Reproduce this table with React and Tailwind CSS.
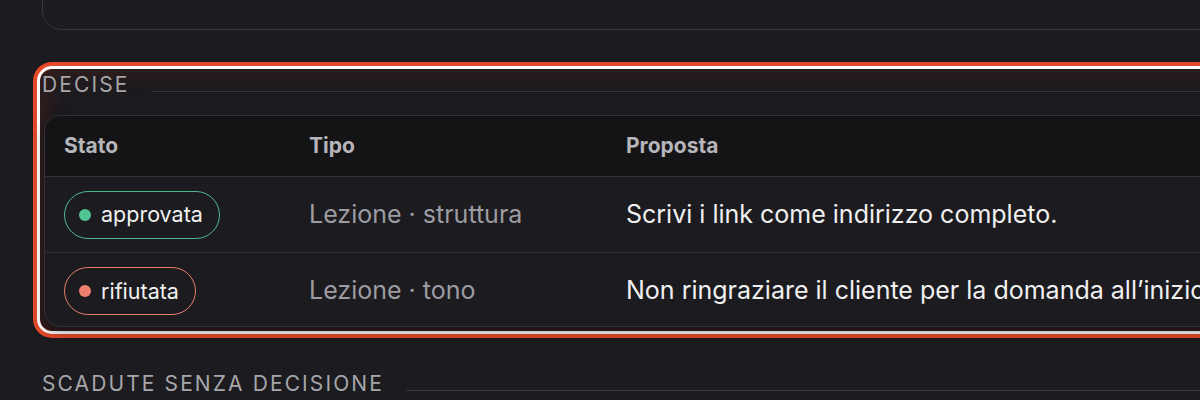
import React from "react";

const rows = [
  {
    status: "approvata",
    tone: "ok",
    kind: "Lezione · struttura",
    text: "Scrivi i link come indirizzo completo.",
  },
  {
    status: "rifiutata",
    tone: "no",
    kind: "Lezione · tono",
    text: "Non ringraziare il cliente per la domanda all’inizio",
  },
];

function StatusPill({ status, tone }) {
  const ok = tone === "ok";
  return (
    <span
      className={
        ok
          ? "inline-flex items-center gap-[10px] h-[48px] pl-[14px] pr-[16px] rounded-full border-[1.5px] border-[#4fb98c] text-[21.5px] text-[#f1f1f1]"
          : "inline-flex items-center gap-[10px] h-[48px] pl-[14px] pr-[16px] rounded-full border-[1.5px] border-[#e47f6c] text-[21.5px] text-[#f1f1f1]"
      }
    >
      <span
        className={
          ok
            ? "w-[12px] h-[12px] rounded-full bg-[#4fc594]"
            : "w-[12px] h-[12px] rounded-full bg-[#f07f70]"
        }
      />
      {status}
    </span>
  );
}

function SectionLabel({ children }) {
  return (
    <div className="flex items-end gap-[22px] pl-[2px]">
      <span className="text-[21px] leading-[28px] tracking-[0.1em] text-[#a6a6ab] whitespace-nowrap">
        {children}
      </span>
      <div className="flex-1 h-px bg-[#37363b] mb-[7px]" />
    </div>
  );
}

export default function App() {
  return (
    <div
      className="w-[1200px] h-[400px] overflow-hidden bg-[#1c1b1f]"
      style={{ fontFamily: "Inter, 'Noto Sans', sans-serif" }}
    >
      <div className="w-[1400px] pl-[40px] flex flex-col">
        {/* card above, mostly scrolled off */}
        <div className="ml-[2px] h-[130px] mt-[-100px] rounded-[20px] border border-[#38373c]" />

        {/* Decise, focused */}
        <section className="mt-[39px] pt-[2px] pb-[4px] rounded-[12px] shadow-[0_0_0_3px_#ffffff,0_0_0_7px_#e5492a,inset_0_0_26px_rgba(150,40,25,0.32)]">
          <SectionLabel>DECISE</SectionLabel>
          <div className="mt-[16px] ml-[4px] rounded-[16px] border border-[#333237] bg-[#1c1b1f] overflow-hidden shadow-[0_6px_14px_rgba(0,0,0,0.35)]">
            <div className="flex items-center h-[61px] bg-[#141316] border-b border-[#343338] text-[21px] font-bold text-[#b5b5ba]">
              <div className="w-[264px] pl-[19px]">Stato</div>
              <div className="w-[317px]">Tipo</div>
              <div className="flex-1">Proposta</div>
            </div>
            {rows.map((r, i) => (
              <div
                key={r.status}
                className={
                  i === 0
                    ? "flex items-center h-[76px] border-b border-[#303034] text-[25px]"
                    : "flex items-center h-[73px] pt-[3px] text-[25px]"
                }
              >
                <div className="w-[264px] pl-[19px] flex">
                  <StatusPill status={r.status} tone={r.tone} />
                </div>
                <div className="w-[317px] text-[#9c9ca2] whitespace-nowrap">{r.kind}</div>
                <div className="flex-1 text-[#f0f0f0] whitespace-nowrap">{r.text}</div>
              </div>
            ))}
          </div>
        </section>

        <div className="mt-[39px]">
          <SectionLabel>SCADUTE SENZA DECISIONE</SectionLabel>
        </div>
      </div>
    </div>
  );
}
